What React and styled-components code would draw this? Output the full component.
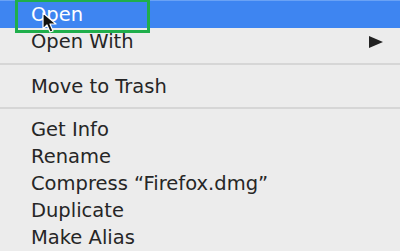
import React from 'react'
import styled, { createGlobalStyle } from 'styled-components'

const Global = createGlobalStyle`
  html, body {
    margin: 0;
    padding: 0;
    background: #ececec;
    overflow: hidden;
  }
`

const Menu = styled.div`
  position: relative;
  width: 400px;
  height: 251px;
  background: #ececec;
  font-family: "DejaVu Sans", "Liberation Sans", sans-serif;
  font-size: 19.5px;
  color: #262626;
  overflow: hidden;
`

const Item = styled.div`
  display: flex;
  align-items: center;
  height: ${({ h }) => h || 27}px;
  padding: 0 17px 0 31px;
  background: ${({ active }) => (active ? '#3e85f1' : 'transparent')};
  color: ${({ active }) => (active ? '#ffffff' : '#262626')};
  border-top: ${({ active }) => (active ? '1px solid #6aa2f5' : 'none')};
  box-sizing: border-box;
  white-space: nowrap;
`

const Label = styled.span`
  flex: 1;
`

const Arrow = styled.span`
  width: 0;
  height: 0;
  border-top: 6px solid transparent;
  border-bottom: 6px solid transparent;
  border-left: 14px solid #222;
`

const Separator = styled.div`
  display: flex;
  align-items: center;
  height: ${({ h }) => h}px;

  &::after {
    content: '';
    flex: 1;
    height: 2px;
    background: #d6d6d6;
  }
`

const Highlight = styled.div`
  position: absolute;
  left: 15px;
  top: -1px;
  width: 135px;
  height: 34px;
  border: 3px solid #1fae4b;
  box-sizing: border-box;
  pointer-events: none;
`

const Cursor = styled.svg`
  position: absolute;
  left: 42px;
  top: 12px;
`

const App = () => {
  return (
    <Menu>
      <Global />
      <Item active h={28}><Label>Open</Label></Item>
      <Item><Label>Open With</Label><Arrow /></Item>
      <Separator h={17} />
      <Item h={28}><Label>Move to Trash</Label></Item>
      <Separator h={16} />
      <Item><Label>Get Info</Label></Item>
      <Item><Label>Rename</Label></Item>
      <Item><Label>Compress “Firefox.dmg”</Label></Item>
      <Item><Label>Duplicate</Label></Item>
      <Item><Label>Make Alias</Label></Item>
      <Highlight />
      <Cursor width="16" height="22" viewBox="0 0 16 22">
        <path d="M1 1 L1 17 L5 13 L8 20 L11 19 L8 12 L14 12 Z" fill="#111" stroke="#fff" strokeWidth="1.2" strokeLinejoin="round" />
      </Cursor>
    </Menu>
  )
}

export default App
